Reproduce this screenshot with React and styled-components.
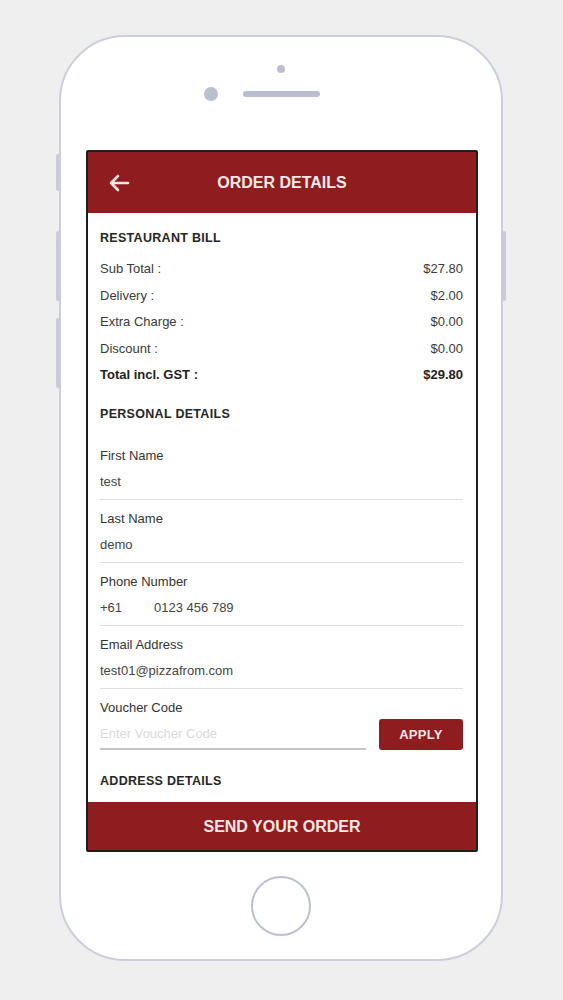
import React from 'react'
import styled, { createGlobalStyle } from 'styled-components'

const GlobalStyle = createGlobalStyle`
  html, body {
    margin: 0;
    padding: 0;
    background: #efefef;
    font-family: "Liberation Sans", Arial, sans-serif;
  }
`

const Page = styled.div`
  width: 563px;
  height: 1000px;
  padding-top: 35px;
  box-sizing: border-box;
`

const Phone = styled.div`
  position: relative;
  margin-left: 59px;
  width: 444px;
  height: 926px;
  box-sizing: border-box;
  border: 2px solid #c9cfdc;
  border-radius: 66px;
  background: #fff;
  display: flex;
  flex-direction: column;
  align-items: center;
  padding-top: 28px;
`

const SideKey = styled.div`
  position: absolute;
  ${p => (p.right ? 'right: -5px;' : 'left: -5px;')}
  top: ${p => p.top}px;
  width: 4px;
  height: ${p => p.h}px;
  background: #c9ccd8;
  border-radius: 2px;
`

const Dot = styled.div`
  width: 8px;
  height: 8px;
  border-radius: 50%;
  background: #b9bfd0;
`

const SensorRow = styled.div`
  margin-top: 14px;
  display: flex;
  align-items: center;
  gap: 25px;
  padding-right: 39px;
`

const Camera = styled.div`
  width: 14px;
  height: 14px;
  border-radius: 50%;
  background: #b9bfd0;
`

const Speaker = styled.div`
  width: 77px;
  height: 6px;
  border-radius: 3px;
  background: #b9bfd0;
`

const Screen = styled.div`
  margin-top: 49px;
  align-self: flex-start;
  margin-left: 25px;
  width: 392px;
  height: 702px;
  box-sizing: border-box;
  border: 2px solid #1e1e1e;
  border-radius: 2px;
  display: flex;
  flex-direction: column;
  overflow: hidden;
  background: #fff;
`

const Header = styled.div`
  height: 61px;
  flex-shrink: 0;
  background: #8f1c1e;
  display: flex;
  align-items: center;
  padding: 0 20px;
`

const Title = styled.div`
  flex: 1;
  text-align: center;
  color: #fbe8e8;
  font-weight: bold;
  font-size: 16px;
  padding-right: 22px;
`

const Body = styled.div`
  flex: 1;
  overflow: hidden;
  padding: 17px 13px 0 12px;
`

const Heading = styled.div`
  font-size: 12.5px;
  line-height: 16px;
  font-weight: bold;
  color: #262626;
  letter-spacing: 0.3px;
  margin-top: ${p => p.mt || 0}px;
`

const BillList = styled.div`
  margin-top: 10px;
`

const BillRow = styled.div`
  display: flex;
  justify-content: space-between;
  height: 26.5px;
  line-height: 26.5px;
  font-size: 13px;
  color: ${p => (p.total ? '#222' : '#3a3a3a')};
  font-weight: ${p => (p.total ? 'bold' : 'normal')};
`

const Fields = styled.div`
  margin-top: 15px;
`

const Field = styled.div`
  padding: 10px 0 8px;
  border-bottom: 1px solid #dedede;
`

const Label = styled.div`
  font-size: 13px;
  line-height: 18px;
  color: #333;
`

const Value = styled.div`
  margin-top: 8px;
  font-size: 13px;
  line-height: 18px;
  color: #444;
  display: flex;
  gap: 32px;
`

const VoucherField = styled.div`
  padding-top: 10px;
  display: flex;
  align-items: flex-end;
  gap: 13px;
`

const VoucherInput = styled.div`
  flex: 1;
  padding-bottom: 5px;
  border-bottom: 2px solid #c4c4c4;
`

const Placeholder = styled(Value)`
  color: #dadada;
`

const ApplyButton = styled.button`
  width: 84px;
  height: 31px;
  border: none;
  border-radius: 3px;
  background: #8f1c1e;
  color: #fbe8e8;
  font-family: inherit;
  font-weight: bold;
  font-size: 13px;
  letter-spacing: 0.3px;
`

const Footer = styled.div`
  height: 48px;
  flex-shrink: 0;
  background: #8f1c1e;
  color: #fbe8e8;
  font-weight: bold;
  font-size: 16px;
  display: flex;
  align-items: center;
  justify-content: center;
  padding-top: 2px;
  box-sizing: border-box;
`

const HomeButton = styled.div`
  margin-top: 24px;
  width: 56px;
  height: 56px;
  border: 2px solid #bac1d1;
  border-radius: 50%;
`

const BackArrow = () => (
  <svg width="22" height="22" viewBox="0 0 22 22" fill="none">
    <path d="M20 11H3M10 4L3 11l7 7" stroke="#fbe8e8" strokeWidth="2.6" strokeLinecap="round" strokeLinejoin="round" />
  </svg>
)

const bill = [
  ['Sub Total :', '$27.80'],
  ['Delivery :', '$2.00'],
  ['Extra Charge :', '$0.00'],
  ['Discount :', '$0.00'],
]

const fields = [
  ['First Name', ['test']],
  ['Last Name', ['demo']],
  ['Phone Number', ['+61', '0123 456 789']],
  ['Email Address', ['test01@pizzafrom.com']],
]

export default function App() {
  return (
    <Page>
      <GlobalStyle />
      <Phone>
        <SideKey top={117} h={37} />
        <SideKey top={194} h={70} />
        <SideKey top={281} h={70} />
        <SideKey right top={194} h={70} />
        <Dot />
        <SensorRow>
          <Camera />
          <Speaker />
        </SensorRow>
        <Screen>
          <Header>
            <BackArrow />
            <Title>ORDER DETAILS</Title>
          </Header>
          <Body>
            <Heading>RESTAURANT BILL</Heading>
            <BillList>
              {bill.map(([k, v]) => (
                <BillRow key={k}>
                  <span>{k}</span>
                  <span>{v}</span>
                </BillRow>
              ))}
              <BillRow total>
                <span>Total incl. GST :</span>
                <span>$29.80</span>
              </BillRow>
            </BillList>
            <Heading mt={17}>PERSONAL DETAILS</Heading>
            <Fields>
              {fields.map(([label, vals]) => (
                <Field key={label}>
                  <Label>{label}</Label>
                  <Value>
                    {vals.map(v => <span key={v}>{v}</span>)}
                  </Value>
                </Field>
              ))}
              <VoucherField>
                <VoucherInput>
                  <Label>Voucher Code</Label>
                  <Placeholder>Enter Voucher Code</Placeholder>
                </VoucherInput>
                <ApplyButton>APPLY</ApplyButton>
              </VoucherField>
            </Fields>
            <Heading mt={23}>ADDRESS DETAILS</Heading>
          </Body>
          <Footer>SEND YOUR ORDER</Footer>
        </Screen>
        <HomeButton />
      </Phone>
    </Page>
  )
}
